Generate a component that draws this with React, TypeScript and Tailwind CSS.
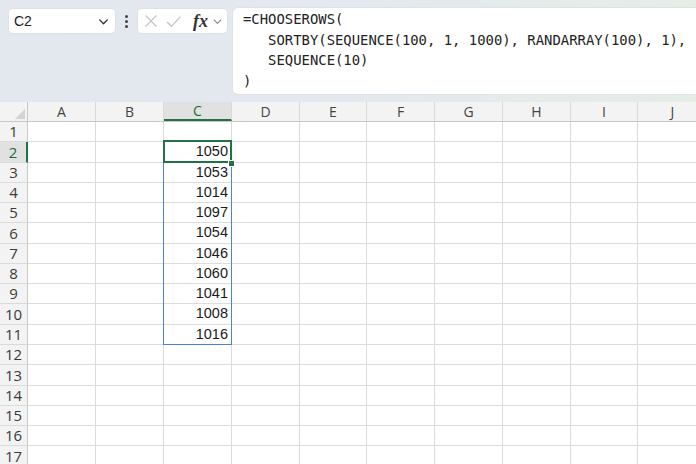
import React from "react";

const colWidths = [68, 68, 68, 68, 67, 68, 68, 68, 67, 70];
const colNames = ["A", "B", "C", "D", "E", "F", "G", "H", "I", "J"];
const rowHeights = [20, 21, 20, 20, 20, 21, 20, 20, 20, 21, 20, 20, 21, 20, 20, 20, 21];
const values: Record<number, string> = {
  2: "1050",
  3: "1053",
  4: "1014",
  5: "1097",
  6: "1054",
  7: "1046",
  8: "1060",
  9: "1041",
  10: "1008",
  11: "1016",
};

function Chevron({ className }: { className?: string }) {
  return (
    <svg viewBox="0 0 12 12" className={className} fill="none" stroke="currentColor" strokeWidth="1.3">
      <path d="M2.5 4.5 L6 8 L9.5 4.5" strokeLinecap="round" strokeLinejoin="round" />
    </svg>
  );
}

export default function App() {
  return (
    <div className="w-[696px] h-[464px] overflow-hidden bg-white" style={{ fontFamily: '"Liberation Sans", Arial, sans-serif' }}>
      {/* Top toolbar */}
      <div className="h-[102px] bg-gradient-to-r from-[#e2e8ee] via-[#e3e9ee] to-[#e6ede7] flex items-start pt-[9px] pl-[9px]">
        <div className="w-[106px] h-[24px] bg-white rounded-[4px] flex items-center justify-between pl-[5px] pr-[5px] shadow-[0_0_0_0.5px_#d5dbe1]">
          <span className="text-[14px] text-[#222]">C2</span>
          <Chevron className="w-[13px] h-[13px] text-[#333]" />
        </div>
        <div className="w-[23px] h-[24px] flex flex-col items-center justify-center gap-[2px]">
          <div className="w-[3px] h-[3px] rounded-full bg-[#444]" />
          <div className="w-[3px] h-[3px] rounded-full bg-[#444]" />
          <div className="w-[3px] h-[3px] rounded-full bg-[#444]" />
        </div>
        <div className="w-[89px] h-[24px] bg-white rounded-[4px] flex items-center pl-[6px] shadow-[0_0_0_0.5px_#d5dbe1]">
          <svg viewBox="0 0 14 14" className="w-[14px] h-[14px]" stroke="#c4c4c4" strokeWidth="1.2" fill="none">
            <path d="M1.5 1.5 L12.5 12.5 M12.5 1.5 L1.5 12.5" />
          </svg>
          <svg viewBox="0 0 14 14" className="w-[15px] h-[15px] ml-[8px]" stroke="#c4c4c4" strokeWidth="1.2" fill="none">
            <path d="M1 7.5 L5 11.5 L13.5 2.5" />
          </svg>
          <span
            className="ml-[12px] text-[18px] italic font-bold text-[#333] leading-none"
            style={{ fontFamily: '"Liberation Serif", "Times New Roman", serif' }}
          >
            fx
          </span>
          <Chevron className="w-[11px] h-[11px] ml-[4px] text-[#888]" />
        </div>
        <div className="ml-[6px] -mt-[1px] flex-1 h-[86px] bg-white rounded-l-[5px] pl-[10px] pt-[1px] shadow-[0_0_0_0.5px_#d5dbe1]">
          <pre
            className="text-[13.9px] leading-[20.7px] text-[#222] m-0"
            style={{ fontFamily: '"DejaVu Sans Mono", "Liberation Mono", monospace' }}
          >
{`=CHOOSEROWS(
   SORTBY(SEQUENCE(100, 1, 1000), RANDARRAY(100), 1),
   SEQUENCE(10)
)`}
          </pre>
        </div>
      </div>

      {/* Grid */}
      <div className="relative">
        {/* Header row */}
        <div className="flex h-[19px] bg-[#f3f3f3] border-b border-[#c8c8c8] box-content">
          <div className="w-[28px] h-[19px] relative border-r border-[#c8c8c8] shrink-0">
            <svg viewBox="0 0 10 10" className="absolute right-[2px] bottom-[2px] w-[10px] h-[10px]">
              <path d="M10 0 L10 10 L0 10 Z" fill="#d4d4d4" />
            </svg>
          </div>
          {colNames.map((c, i) => (
            <div
              key={c}
              className={
                c === "C"
                  ? "shrink-0 h-[19px] flex items-center justify-center border-r border-[#dadada] bg-[#e1e1e1] text-[#1e6b3c] text-[14px] border-b-2 border-b-[#217346]"
                  : "shrink-0 h-[19px] flex items-center justify-center border-r border-[#dadada] text-[#444] text-[14px]"
              }
              style={{ width: colWidths[i], fontFamily: '"Open Sans", "Liberation Sans", sans-serif' }}
            >
              {c}
            </div>
          ))}
        </div>
        {/* Rows */}
        {rowHeights.map((h, r) => {
          const rowNum = r + 1;
          return (
            <div key={rowNum} className="flex" style={{ height: h }}>
              <div
                className={
                  rowNum === 2
                    ? "w-[28px] shrink-0 flex items-center justify-center bg-[#e1e1e1] text-[#1e6b3c] text-[15px] border-r-2 border-r-[#217346] border-b border-b-[#dadada]"
                    : "w-[28px] shrink-0 flex items-center justify-center bg-[#f3f3f3] text-[#3a3a3a] text-[15px] border-r border-r-[#c8c8c8] border-b border-b-[#dadada]"
                }
                style={{ fontFamily: '"Open Sans", "Liberation Sans", sans-serif' }}
              >
                {rowNum}
              </div>
              {colNames.map((c, i) => (
                <div
                  key={c}
                  className="shrink-0 border-r border-b border-[#dcdcdc] flex items-center justify-end pr-[3px] text-[14.5px] text-[#1a1a1a]"
                  style={{ width: colWidths[i] }}
                >
                  {c === "C" && values[rowNum] ? values[rowNum] : ""}
                </div>
              ))}
            </div>
          );
        })}
        {/* Spill range border (blue) */}
        <div className="absolute left-[163px] top-[39px] w-[69px] h-[204px] border border-[#4c82d6] pointer-events-none" />
        {/* Active cell border (green) */}
        <div className="absolute left-[163px] top-[38px] w-[69px] h-[23px] border-2 border-[#217346] pointer-events-none" />
        {/* Fill handle */}
        <div className="absolute left-[229px] top-[58px] w-[5px] h-[5px] bg-[#217346] border border-white box-content -translate-x-[1px]" />
      </div>
    </div>
  );
}
